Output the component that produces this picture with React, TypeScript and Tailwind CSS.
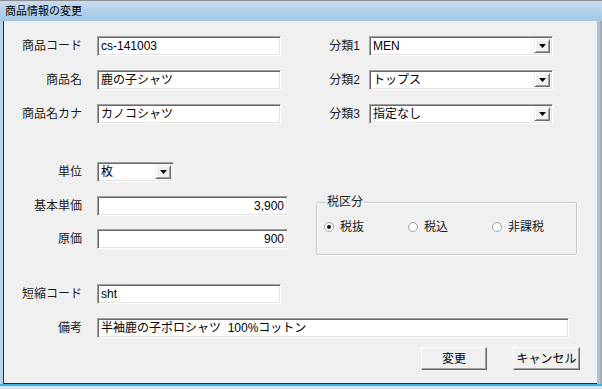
const FONT = "font-['Liberation_Sans','Noto_Sans_CJK_JP',sans-serif]";

const inset =
  "bg-white border border-t-[#a0a0a0] border-l-[#a0a0a0] border-r-white border-b-white shadow-[inset_1px_1px_0_#696969,inset_-1px_-1px_0_#e3e3e3]";

function TextBox({ value, w, right }: { value: string; w: string; right?: boolean }) {
  return (
    <div className={`${inset} ${w} h-[20px] flex items-center px-[3px] text-[12px] leading-none text-black ${right ? "justify-end" : ""}`}>
      <span className="whitespace-pre">{value}</span>
    </div>
  );
}

function Select({ value, w }: { value: string; w: string }) {
  return (
    <div className={`${inset} ${w} h-[20px] flex items-stretch p-[2px] text-[12px] leading-none text-black`}>
      <div className="flex-1 flex items-center pl-[1px]">{value}</div>
      <div className="w-[16px] bg-[#f0f0f0] border border-t-[#f0f0f0] border-l-[#f0f0f0] border-r-[#696969] border-b-[#696969] shadow-[inset_1px_1px_0_#ffffff,inset_-1px_-1px_0_#a0a0a0] flex items-center justify-center">
        <svg width="7" height="4" viewBox="0 0 7 4">
          <path d="M0 0h7L3.5 4z" fill="#000" />
        </svg>
      </div>
    </div>
  );
}

function Label({ children, w = "w-[78px]" }: { children: React.ReactNode; w?: string }) {
  return <div className={`${w} text-right text-[12px] leading-none text-[#1a1a1a] whitespace-nowrap`}>{children}</div>;
}

function Radio({ label, checked, w = "w-[84px]" }: { label: string; checked?: boolean; w?: string }) {
  return (
    <div className={`${w} flex items-center gap-[6px]`}>
      <div className="w-[10px] h-[10px] rounded-full bg-white border border-[#a6a6a6] flex items-center justify-center">
        {checked && <div className="w-[4px] h-[4px] rounded-full bg-[#111]" />}
      </div>
      <span className="text-[12px] leading-none text-[#1a1a1a]">{label}</span>
    </div>
  );
}

function Button({ children, w }: { children: React.ReactNode; w: string }) {
  return (
    <button className={`${w} h-[23px] bg-[#f0f0f0] border border-t-white border-l-white border-r-[#696969] border-b-[#696969] shadow-[inset_-1px_-1px_0_#a0a0a0] text-[12px] leading-none text-black`}>
      {children}
    </button>
  );
}

export default function App() {
  return (
    <div className={`${FONT} w-[602px] h-[389px] overflow-hidden bg-[#b8d3ea] flex flex-col`}>
      {/* Title bar */}
      <div className="h-[21px] border-t border-[#8c8c8c] bg-gradient-to-b from-[#c6dcf0] to-[#a3c6e5] pl-[5px] flex items-center text-[11px] text-black">
        商品情報の変更
      </div>

      <div className="flex h-[363px]">
        <div className="w-[3px] bg-[#b8d3ea]" />
        <div className="w-[1px] bg-[#2e2e2e]" />

        {/* Body */}
        <div className="flex-1 bg-[#f0f0f0] border-b border-[#2e2e2e] flex flex-col">
          {/* Top block */}
          <div className="flex mt-[15px]">
            <div className="w-[296px] flex flex-col gap-[14px]">
              <div className="flex items-center gap-[15px]">
                <Label>商品コード</Label>
                <TextBox value="cs-141003" w="w-[184px]" />
              </div>
              <div className="flex items-center gap-[15px]">
                <Label>商品名</Label>
                <TextBox value="鹿の子シャツ" w="w-[184px]" />
              </div>
              <div className="flex items-center gap-[15px]">
                <Label>商品名カナ</Label>
                <TextBox value="カノコシャツ" w="w-[184px]" />
              </div>
            </div>
            <div className="flex flex-col gap-[14px]">
              <div className="flex items-center gap-[9px]">
                <Label w="w-[60px]">分類1</Label>
                <Select value="MEN" w="w-[184px]" />
              </div>
              <div className="flex items-center gap-[9px]">
                <Label w="w-[60px]">分類2</Label>
                <Select value="トップス" w="w-[184px]" />
              </div>
              <div className="flex items-center gap-[9px]">
                <Label w="w-[60px]">分類3</Label>
                <Select value="指定なし" w="w-[184px]" />
              </div>
            </div>
          </div>

          {/* Unit and prices */}
          <div className="flex items-center gap-[15px] mt-[38px]">
            <Label>単位</Label>
            <Select value="枚" w="w-[77px]" />
          </div>

          <div className="flex mt-[14px]">
            <div className="w-[312px] flex flex-col gap-[13px]">
              <div className="flex items-center gap-[15px]">
                <Label>基本単価</Label>
                <TextBox value="3,900" w="w-[191px]" right />
              </div>
              <div className="flex items-center gap-[15px]">
                <Label>原価</Label>
                <TextBox value="900" w="w-[191px]" right />
              </div>
            </div>

            <fieldset className="w-[261px] min-w-0 h-[60px] border border-[#c6c6c6] shadow-[inset_1px_1px_0_#ffffff,1px_1px_0_#ffffff] rounded-[2px] px-[7px] -mt-[1px]">
              <legend className="ml-[2px] px-[1px] text-[12px] leading-[14px] text-[#1a1a1a]">税区分</legend>
              <div className="flex mt-[12px]">
                <Radio label="税抜" checked />
                <Radio label="税込" />
                <Radio label="非課税" w="w-auto" />
              </div>
            </fieldset>
          </div>

          {/* Short code & notes */}
          <div className="flex items-center gap-[15px] mt-[29px]">
            <Label>短縮コード</Label>
            <TextBox value="sht" w="w-[184px]" />
          </div>
          <div className="flex items-center gap-[15px] mt-[14px]">
            <Label>備考</Label>
            <TextBox value="半袖鹿の子ポロシャツ  100%コットン" w="w-[472px]" />
          </div>

          <div className="flex justify-end gap-[26px] mt-[9px] pr-[17px]">
            <Button w="w-[66px]">変更</Button>
            <Button w="w-[67px]">キャンセル</Button>
          </div>
        </div>

        <div className="w-[2px] bg-[#9cc6e6]" />
        <div className="w-[3px] bg-gradient-to-r from-[#c4c4c4] to-[#9a9a9a]" />
      </div>

      <div className="h-[2px] bg-[#3cb4dc]" />
      <div className="flex-1 bg-[#d3e6f3]" />
    </div>
  );
}
